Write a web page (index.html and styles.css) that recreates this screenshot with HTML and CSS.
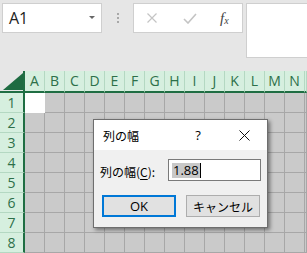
FILE: index.html
```html
<!DOCTYPE html>
<html lang="ja">
<head>
<meta charset="utf-8">
<link rel="stylesheet" href="styles.css">
</head>
<body>
<div class="toolbar">
  <div class="namebox">
    <span class="cellref">A1</span>
    <span class="dropdown"></span>
  </div>
  <div class="grip"><i></i><i></i><i></i></div>
  <div class="fbar">
    <svg class="ic-x" width="10" height="10" viewBox="0 0 10 10"><path d="M0.5 0.5 L9.5 9.5 M9.5 0.5 L0.5 9.5" stroke="#c4c4c4" stroke-width="1.2" fill="none"/></svg>
    <svg class="ic-ok" width="14" height="11" viewBox="0 0 14 11"><path d="M1 6 L5 10 L13 1" stroke="#c4c4c4" stroke-width="1.6" fill="none"/></svg>
    <span class="fx">f<sub>x</sub></span>
  </div>
  <div class="fbox"></div>
</div>

<div class="sheet">
  <div class="corner"><svg width="23" height="20" viewBox="0 0 23 20"><polygon points="3,19 23,19 23,2" fill="#1e6b41"/></svg></div>
  <div class="ch">A</div><div class="ch">B</div><div class="ch">C</div><div class="ch">D</div><div class="ch">E</div><div class="ch">F</div><div class="ch">G</div><div class="ch">H</div><div class="ch">I</div><div class="ch">J</div><div class="ch">K</div><div class="ch">L</div><div class="ch">M</div><div class="ch">N</div><div class="ch"></div>

  <div class="rh">1</div><div class="c sel"></div><div class="c"></div><div class="c"></div><div class="c"></div><div class="c"></div><div class="c"></div><div class="c"></div><div class="c"></div><div class="c"></div><div class="c"></div><div class="c"></div><div class="c"></div><div class="c"></div><div class="c"></div><div class="c"></div>
  <div class="rh">2</div><div class="c"></div><div class="c"></div><div class="c"></div><div class="c"></div><div class="c"></div><div class="c"></div><div class="c"></div><div class="c"></div><div class="c"></div><div class="c"></div><div class="c"></div><div class="c"></div><div class="c"></div><div class="c"></div><div class="c"></div>
  <div class="rh">3</div><div class="c"></div><div class="c"></div><div class="c"></div><div class="c"></div><div class="c"></div><div class="c"></div><div class="c"></div><div class="c"></div><div class="c"></div><div class="c"></div><div class="c"></div><div class="c"></div><div class="c"></div><div class="c"></div><div class="c"></div>
  <div class="rh">4</div><div class="c"></div><div class="c"></div><div class="c"></div><div class="c"></div><div class="c"></div><div class="c"></div><div class="c"></div><div class="c"></div><div class="c"></div><div class="c"></div><div class="c"></div><div class="c"></div><div class="c"></div><div class="c"></div><div class="c"></div>
  <div class="rh">5</div><div class="c"></div><div class="c"></div><div class="c"></div><div class="c"></div><div class="c"></div><div class="c"></div><div class="c"></div><div class="c"></div><div class="c"></div><div class="c"></div><div class="c"></div><div class="c"></div><div class="c"></div><div class="c"></div><div class="c"></div>
  <div class="rh">6</div><div class="c"></div><div class="c"></div><div class="c"></div><div class="c"></div><div class="c"></div><div class="c"></div><div class="c"></div><div class="c"></div><div class="c"></div><div class="c"></div><div class="c"></div><div class="c"></div><div class="c"></div><div class="c"></div><div class="c"></div>
  <div class="rh">7</div><div class="c"></div><div class="c"></div><div class="c"></div><div class="c"></div><div class="c"></div><div class="c"></div><div class="c"></div><div class="c"></div><div class="c"></div><div class="c"></div><div class="c"></div><div class="c"></div><div class="c"></div><div class="c"></div><div class="c"></div>
  <div class="rh">8</div><div class="c"></div><div class="c"></div><div class="c"></div><div class="c"></div><div class="c"></div><div class="c"></div><div class="c"></div><div class="c"></div><div class="c"></div><div class="c"></div><div class="c"></div><div class="c"></div><div class="c"></div><div class="c"></div><div class="c"></div>
</div>

<div class="dialog">
  <div class="titlebar">
    <span class="title">列の幅</span>
    <span class="capbtn">?</span>
    <span class="capbtn"><svg width="11" height="11" viewBox="0 0 11 11"><path d="M0.5 0.5 L10.5 10.5 M10.5 0.5 L0.5 10.5" stroke="#111" stroke-width="1" fill="none"/></svg></span>
  </div>
  <div class="dbody">
    <div class="field">
      <label class="lbl">列の幅(<u>C</u>):</label>
      <div class="input"><span class="selected">1.88</span><span class="caret"></span></div>
    </div>
    <div class="buttons">
      <div class="btn default">OK</div>
      <div class="btn">キャンセル</div>
    </div>
  </div>
</div>
</body>
</html>
```

FILE: styles.css
```css
* { box-sizing: border-box; }
html, body { margin: 0; padding: 0; }
body {
  width: 307px;
  height: 253px;
  overflow: hidden;
  background: #e6e6e6;
  font-family: "Open Sans", "Noto Sans CJK JP", sans-serif;
  position: relative;
}

.toolbar {
  height: 71px;
  display: flex;
  align-items: flex-start;
  padding: 3px 0 0 2px;
}
.namebox {
  width: 100px;
  height: 30px;
  background: #fff;
  border: 1px solid #cfcfcf;
  display: flex;
  align-items: center;
  justify-content: space-between;
  padding: 0 6px 0 6px;
}
.cellref {
  font-size: 16px;
  color: #222;
  font-family: "Open Sans", sans-serif;
}
.dropdown {
  width: 0;
  height: 0;
  border-left: 3px solid transparent;
  border-right: 3px solid transparent;
  border-top: 3px solid #666;
  margin-top: -1px;
}
.grip {
  width: 31px;
  height: 30px;
  display: flex;
  flex-direction: column;
  align-items: center;
  justify-content: center;
  gap: 2px;
}
.grip i {
  display: block;
  width: 2px;
  height: 2px;
  background: #a8a8a8;
}
.fbar {
  width: 110px;
  height: 30px;
  background: #fff;
  border: 1px solid #cfcfcf;
  display: flex;
  align-items: center;
  padding-left: 13px;
}
.ic-x { margin-right: 26px; }
.ic-ok { margin-right: 23px; }
.fx {
  font-family: "Liberation Serif", serif;
  font-style: italic;
  font-size: 15px;
  color: #444;
  line-height: 1;
}
.fx sub { font-size: 10px; vertical-align: -1px; }
.fbox {
  flex: 1;
  margin-left: 3px;
  height: 55px;
  background: #fff;
  border: 1px solid #cfcfcf;
  border-right: none;
}

.sheet {
  display: grid;
  grid-template-columns: 25px repeat(14, 20px) 2px;
  grid-template-rows: 22px repeat(8, 20px);
}
.corner {
  background: #e6e6e6;
  border-right: 2px solid #1f6e43;
  border-bottom: 2px solid #1f6e43;
}
.corner svg { display: block; }
.ch {
  background: #d6efdf;
  border-right: 1px solid #b4d8c2;
  border-bottom: 2px solid #1f6e43;
  color: #2d7049;
  font-size: 14px;
  line-height: 20px;
  text-align: center;
}
.rh {
  background: #d6efdf;
  border-right: 2px solid #1f6e43;
  border-bottom: 1px solid #b4d8c2;
  color: #2d7049;
  font-size: 14px;
  line-height: 19px;
  text-align: center;
}
.c {
  background: #cacaca;
  border-right: 1px solid #a7a7a7;
  border-bottom: 1px solid #a7a7a7;
}
.c.sel { background: #fff; border-color: #fff; }

.dialog {
  position: absolute;
  left: 93px;
  top: 119px;
  width: 175px;
  height: 109px;
  border: 1px solid #6e6e6e;
  background: #f0f0f0;
  box-shadow: 2px 2px 4px rgba(0,0,0,0.45);
  display: flex;
  flex-direction: column;
  font-family: "Noto Sans CJK JP", sans-serif;
  color: #000;
}
.titlebar {
  height: 30px;
  background: #fff;
  display: flex;
  align-items: center;
}
.title {
  flex: 1;
  padding-left: 9px;
  font-size: 12px;
}
.capbtn {
  width: 46px;
  height: 30px;
  display: flex;
  align-items: center;
  justify-content: center;
  font-size: 13px;
  font-family: "Open Sans", sans-serif;
}
.dbody {
  flex: 1;
  padding: 9px 6px 0 6px;
  display: flex;
  flex-direction: column;
}
.field {
  display: flex;
  align-items: center;
  justify-content: space-between;
}
.lbl {
  font-size: 12px;
  padding-top: 2px;
}
.lbl u { text-decoration-thickness: 1px; text-underline-offset: 2px; }
.input {
  width: 93px;
  height: 22px;
  background: #fff;
  border: 1px solid #7a7a7a;
  display: flex;
  align-items: center;
  padding-left: 3px;
}
.selected {
  background: #c8c8c8;
  font-family: "Open Sans", sans-serif;
  font-size: 13px;
  line-height: 15px;
  padding: 0 1px;
}
.caret {
  width: 1px;
  height: 15px;
  background: #000;
}
.buttons {
  display: flex;
  gap: 10px;
  margin-top: 14px;
  padding-left: 2px;
}
.btn {
  width: 74px;
  height: 22px;
  background: #e1e1e1;
  border: 1px solid #adadad;
  display: flex;
  align-items: center;
  justify-content: center;
  font-size: 12px;
}
.btn.default {
  border: 2px solid #0078d7;
  font-family: "Open Sans", sans-serif;
  font-size: 13px;
}
```
